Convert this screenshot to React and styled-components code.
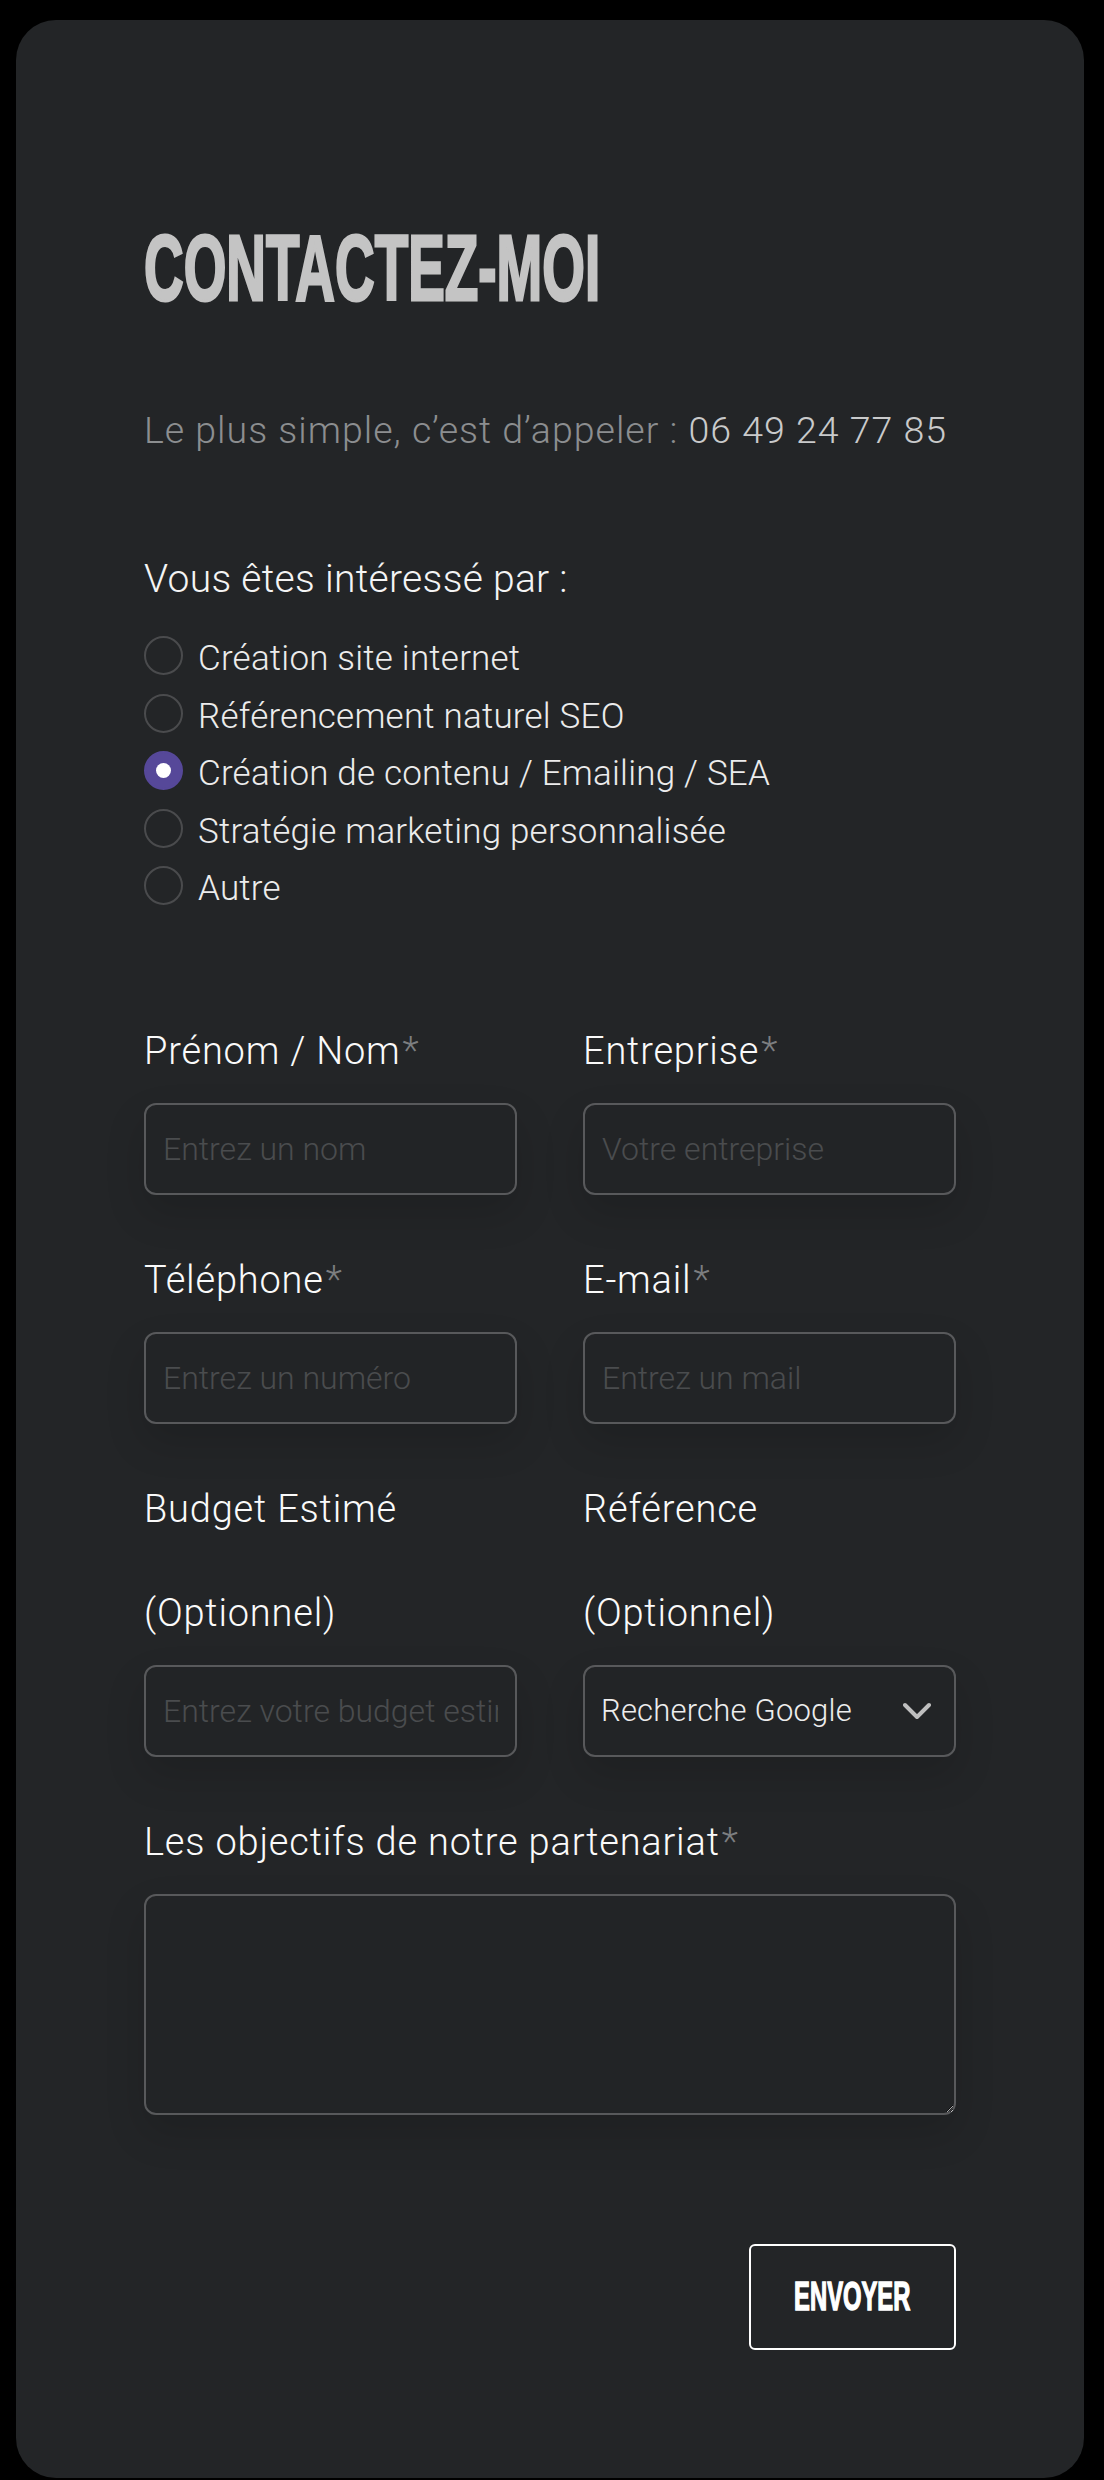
import React, { useState } from "react";
import styled, { createGlobalStyle } from "styled-components";

const GlobalStyle = createGlobalStyle`
    html, body {
        margin: 0;
        padding: 0;
        background: #000;
    }
    * {
        box-sizing: border-box;
    }
`;

const Card = styled.div`
    width: 1068px;
    min-height: 2458px;
    margin: 20px 0 0 16px;
    padding: 202px 128px 0;
    background: #232527;
    border-radius: 40px;
    font-family: Roboto, "Liberation Sans", sans-serif;
    font-weight: 300;
`;

const Title = styled.h1`
    margin: 0;
    font-family: "Liberation Sans", Arial, sans-serif;
    font-weight: 700;
    font-size: 93px;
    line-height: 92px;
    height: 92px;
    color: #c4c4c4;
    -webkit-text-stroke: 3px #c4c4c4;

    > span {
        display: inline-block;
        transform: scaleX(0.59);
        transform-origin: left center;
        white-space: nowrap;
    }
`;

const Intro = styled.p`
    margin: 88px 0 0;
    font-size: 37.5px;
    line-height: 56px;
    letter-spacing: 1px;
    color: #8c8e90;

    > span {
        color: #c9cacb;
    }
`;

const Question = styled.p`
    margin: 93px 0 0;
    font-size: 39px;
    line-height: 56px;
    letter-spacing: 0.3px;
    color: #f4f4f4;
`;

const Options = styled.div`
    margin-top: 23px;
    display: flex;
    flex-direction: column;
`;

const Option = styled.label`
    display: flex;
    align-items: center;
    height: 57.5px;
    font-size: 35px;
    letter-spacing: 0.2px;
    color: #ececec;
    cursor: pointer;
`;

const Dot = styled.span`
    flex: none;
    width: 39px;
    height: 39px;
    margin: 0 15px 6px 0;
    border-radius: 50%;
    border: 2px solid ${({ $checked }) => ($checked ? "#564899" : "#4a4b4d")};
    background: ${({ $checked }) => ($checked ? "#564899" : "transparent")};
    display: flex;
    align-items: center;
    justify-content: center;

    &::after {
        content: "";
        width: 15px;
        height: 15px;
        border-radius: 50%;
        background: #fff;
        display: ${({ $checked }) => ($checked ? "block" : "none")};
    }
`;

const Form = styled.form`
    margin-top: 81px;
    display: grid;
    grid-template-columns: 1fr 1fr;
    column-gap: 66px;
    row-gap: 33px;
`;

const Field = styled.div`
    display: flex;
    flex-direction: column;
    grid-column: ${({ $wide }) => ($wide ? "1 / -1" : "auto")};
`;

const Label = styled.label`
    font-size: 38px;
    line-height: 104px;
    letter-spacing: 0.8px;
    color: #fafafa;

    > em {
        font-style: normal;
        color: #7c7e80;
        margin-left: 2px;
    }
`;

const boxStyle = `
    width: 100%;
    border: 2px solid #58595b;
    border-radius: 12px;
    background: #222426;
    box-shadow: 0 18px 40px rgba(0, 0, 0, 0.14);
    font-family: Roboto, "Liberation Sans", sans-serif;
    font-weight: 300;
    outline: none;
`;

const Input = styled.input`
    ${boxStyle}
    height: 92px;
    padding: 0 17px;
    font-size: 32px;
    color: #e6e6e6;

    &::placeholder {
        color: #4a4c4e;
    }
`;

const SelectWrap = styled.div`
    position: relative;

    > svg {
        position: absolute;
        right: 25px;
        top: 50%;
        transform: translateY(-50%);
        pointer-events: none;
    }
`;

const Select = styled.select`
    ${boxStyle}
    appearance: none;
    height: 92px;
    padding: 0 60px 0 16px;
    font-size: 31px;
    letter-spacing: 0.2px;
    color: #ededed;
`;

const TextArea = styled.textarea`
    ${boxStyle}
    color-scheme: dark;
    height: 221px;
    padding: 16px 17px;
    font-size: 32px;
    color: #e6e6e6;
    resize: vertical;
`;

const Actions = styled.div`
    margin-top: 129px;
    display: flex;
    justify-content: flex-end;
`;

const SendButton = styled.button`
    width: 207px;
    height: 106px;
    border: 2px solid #fff;
    border-radius: 6px;
    background: transparent;
    color: #fff;
    font-family: "Liberation Sans", Arial, sans-serif;
    font-weight: 700;
    font-size: 41px;
    -webkit-text-stroke: 1.5px #fff;
    cursor: pointer;
    display: flex;
    align-items: center;
    justify-content: center;
    padding: 0;

    > span {
        display: inline-block;
        transform: scaleX(0.58);
        transform-origin: center;
    }
`;

const OPTIONS = [
    "Création site internet",
    "Référencement naturel SEO",
    "Création de contenu / Emailing / SEA",
    "Stratégie marketing personnalisée",
    "Autre",
];

const Chevron = () => (
    <svg width="28" height="18" viewBox="0 0 28 18" fill="none">
        <path
            d="M2 3l12 12L26 3"
            stroke="#bfbfbf"
            strokeWidth="4"
            strokeLinecap="round"
            strokeLinejoin="round"
        />
    </svg>
);

const App = () => {
    const [choice, setChoice] = useState(2);

    return (
        <>
            <GlobalStyle />
            <Card>
                <Title>
                    <span>CONTACTEZ-MOI</span>
                </Title>
                <Intro>
                    Le plus simple, c’est d’appeler : <span>06 49 24 77 85</span>
                </Intro>

                <Question>Vous êtes intéressé par :</Question>
                <Options>
                    {OPTIONS.map((label, i) => (
                        <Option key={label} onClick={() => setChoice(i)}>
                            <Dot $checked={choice === i} />
                            {label}
                        </Option>
                    ))}
                </Options>

                <Form onSubmit={(e) => e.preventDefault()}>
                    <Field>
                        <Label>
                            Prénom / Nom<em>*</em>
                        </Label>
                        <Input placeholder="Entrez un nom" />
                    </Field>
                    <Field>
                        <Label>
                            Entreprise<em>*</em>
                        </Label>
                        <Input placeholder="Votre entreprise" />
                    </Field>
                    <Field>
                        <Label>
                            Téléphone<em>*</em>
                        </Label>
                        <Input placeholder="Entrez un numéro" />
                    </Field>
                    <Field>
                        <Label>
                            E-mail<em>*</em>
                        </Label>
                        <Input placeholder="Entrez un mail" />
                    </Field>
                    <Field>
                        <Label>Budget Estimé (Optionnel)</Label>
                        <Input placeholder="Entrez votre budget estimé" />
                    </Field>
                    <Field>
                        <Label>Référence (Optionnel)</Label>
                        <SelectWrap>
                            <Select defaultValue="google">
                                <option value="google">Recherche Google</option>
                                <option value="social">Réseaux sociaux</option>
                                <option value="other">Autre</option>
                            </Select>
                            <Chevron />
                        </SelectWrap>
                    </Field>
                    <Field $wide>
                        <Label>
                            Les objectifs de notre partenariat<em>*</em>
                        </Label>
                        <TextArea />
                    </Field>
                </Form>

                <Actions>
                    <SendButton type="submit">
                        <span>ENVOYER</span>
                    </SendButton>
                </Actions>
            </Card>
        </>
    );
};

export default App;
